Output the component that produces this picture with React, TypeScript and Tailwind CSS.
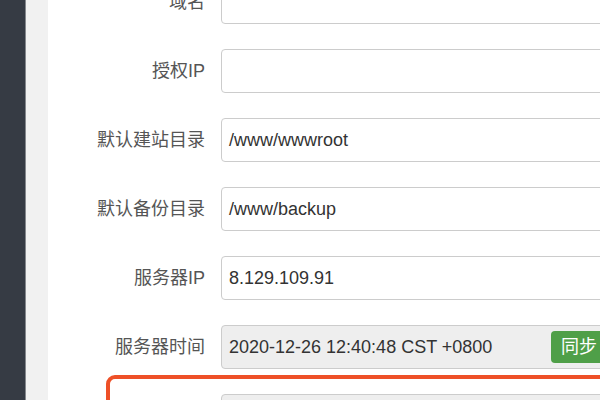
import React from 'react'

const font = { fontFamily: '"Liberation Sans", "Noto Sans CJK SC", sans-serif' }

type Row = {
  key: string
  label?: string
  value?: string
  disabled?: boolean
  sync?: boolean
}

const rows: Row[] = [
  { key: 'domain', label: '域名' },
  { key: 'ip', label: '授权IP' },
  { key: 'site', label: '默认建站目录', value: '/www/wwwroot' },
  { key: 'backup', label: '默认备份目录', value: '/www/backup' },
  { key: 'server', label: '服务器IP', value: '8.129.109.91' },
  { key: 'time', label: '服务器时间', value: '2020-12-26 12:40:48 CST +0800', disabled: true, sync: true },
  { key: 'port', disabled: true },
]

const FormRow = ({ row }: { row: Row }) => (
  <div className="flex items-center h-[44px]">
    <div className="w-[157px] shrink-0 text-right text-[18px] text-[#555] leading-none">{row.label}</div>
    <div
      className={`ml-[16px] w-[392px] shrink-0 h-[44px] flex items-center border border-[#ccc] rounded-[4px] pl-[7px] pr-[5px] ${
        row.disabled ? 'bg-[#eeeeee]' : 'bg-white'
      }`}
    >
      <span className="text-[18px] text-[#333] leading-none whitespace-nowrap">{row.value}</span>
      {row.sync && (
        <button className="ml-auto h-[32px] px-[10px] rounded-[4px] bg-[#4f9f48] text-white text-[18px] leading-none">
          同步
        </button>
      )}
    </div>
  </div>
)

export default function App() {
  return (
    <div className="relative flex w-[600px] h-[400px] overflow-hidden bg-white" style={font}>
      {/* 左侧导航 */}
      <div className="w-[26px] shrink-0 bg-[#363b44] border-r border-[#85888d]" />
      <div className="w-[22px] shrink-0 bg-[#f1f1f1]" />

      {/* 表单 */}
      <div className="flex-1 bg-white overflow-hidden">
        <div className="mt-[-20px] flex flex-col gap-[25px]">
          {rows.map((row) => (
            <FormRow key={row.key} row={row} />
          ))}
        </div>
      </div>

      {/* 高亮框 */}
      <div className="absolute left-[106px] top-[375px] w-[520px] h-[80px] border-4 border-[#ee5027] rounded-[9px] pointer-events-none" />
    </div>
  )
}
